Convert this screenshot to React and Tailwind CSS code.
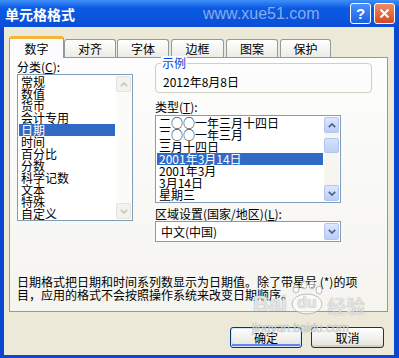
/*
 * excel "format cells" dialog, windows xp luna look
 */
const categories = ['常规', '数值', '货币', '会计专用', '日期', '时间', '百分比', '分数', '科学记数', '文本', '特殊', '自定义'];
const types = ['二○○一年三月十四日', '二○○一年三月', '三月十四日', '2001年3月14日', '2001年3月', '3月14日', '星期三'];
const tabs = [
  { label: '数字', cls: 'w-[55px]' },
  { label: '对齐', cls: 'w-[52px]' },
  { label: '字体', cls: 'w-[52px] ml-[1px]' },
  { label: '边框', cls: 'w-[53px] ml-[2px]' },
  { label: '图案', cls: 'w-[52px] ml-[2px]' },
  { label: '保护', cls: 'w-[51px] ml-[2px]' },
];

function Chevron({ up, color }) {
  return (
    <svg width="8" height="5" viewBox="0 0 8 5">
      <polyline
        points={up ? '0.8,4.2 4,1 7.2,4.2' : '0.8,0.8 4,4 7.2,0.8'}
        fill="none"
        stroke={color}
        strokeWidth="1.7"
      />
    </svg>
  );
}

function ScrollBtn({ up, disabled }) {
  return (
    <div
      className={`h-[16px] w-[15px] flex items-center justify-center rounded-[2px] border ${
        disabled
          ? 'border-[#e6e4dc] bg-[#f3f2ed]'
          : 'border-[#b3c5ef] bg-linear-to-b from-[#dde8fe] to-[#b9cdf8]'
      }`}
    >
      <Chevron up={up} color={disabled ? '#c9c7bb' : '#4d6185'} />
    </div>
  );
}

export default function App() {
  return (
    <div className="w-[399px] h-[358px] bg-[#0a48d2] relative overflow-hidden text-black font-['Noto_Sans_CJK_SC','Noto_Sans',sans-serif]">
      {/* title bar */}
      <div className="h-[27px] flex items-center bg-linear-to-b from-[#3f8ff8] via-[#0b5ae4] via-30% to-[#0a4fd6]">
        <span className="ml-[5px] text-[14px] font-bold text-white leading-none">单元格格式</span>
        <span className="ml-[128px] text-[16px] text-[#86acec] font-['Liberation_Sans',sans-serif] leading-none">www.xue51.com</span>
        <div className="ml-auto mr-[4px] flex gap-[3px]">
          <div className="w-[21px] h-[21px] rounded-[3px] border border-white bg-linear-to-b from-[#4b92fa] to-[#1d5fe2] flex items-center justify-center text-white text-[15px] font-bold font-['Liberation_Sans',sans-serif] leading-none">
            ?
          </div>
          <div className="w-[21px] h-[21px] rounded-[3px] border border-white bg-linear-to-b from-[#f08a64] to-[#d9471f] flex items-center justify-center">
            <svg width="11" height="11" viewBox="0 0 11 11">
              <path d="M1.5 1.5 L9.5 9.5 M9.5 1.5 L1.5 9.5" stroke="white" strokeWidth="2" />
            </svg>
          </div>
        </div>
      </div>

      {/* dialog body */}
      <div className="ml-[4px] mr-[5px] h-[328px] bg-[#ece9d8] pl-[5px] pt-[9px] flex flex-col text-[12px]">
        {/* tabs */}
        <div className="flex items-end h-[21px]">
          {tabs.map((t, i) =>
            i === 0 ? (
              <div
                key={t.label}
                className={`${t.cls} h-[22px] -mb-[1px] relative z-10 flex items-center justify-center pt-[1px] bg-[#fcfcfe] border-x border-[#919b9c] border-t-[3px] border-t-[#f5b53a] rounded-t-[3px]`}
              >
                {t.label}
              </div>
            ) : (
              <div
                key={t.label}
                className={`${t.cls} h-[18px] flex items-center justify-center border-x border-t border-[#919b9c] rounded-t-[3px] bg-linear-to-b from-white to-[#ecebe5]`}
              >
                {t.label}
              </div>
            )
          )}
        </div>

        {/* tab panel */}
        <div className="h-[255px] w-[379px] border border-[#919b9c] bg-linear-to-b from-[#fdfdfd] to-[#f5f4ef] pl-[7px] pt-[2px] flex flex-col">
          <div className="flex">
            {/* category column */}
            <div className="w-[116px]">
              <div className="h-[14px] leading-[13px]">
                分类(<span className="underline">C</span>):
              </div>
              <div className="h-[147px] border border-[#7f9db9] bg-white flex p-[1px]">
                <div className="flex-1">
                  {categories.map((c, i) => (
                    <div
                      key={c}
                      className={`h-[12px] leading-[12px] pl-[2px] ${i === 4 ? 'bg-[#316ac5] text-white' : ''}`}
                    >
                      {c}
                    </div>
                  ))}
                </div>
                <div className="w-[15px] ml-[1px] flex flex-col justify-between bg-[#fbfbf9]">
                  <ScrollBtn up disabled />
                  <ScrollBtn disabled />
                </div>
              </div>
            </div>

            {/* right column */}
            <div className="ml-[22px] flex flex-col">
              <div className="mt-[3px] w-[217px] h-[30px] border border-[#d0d0bf] rounded-[4px] relative pl-[7px] pt-[11px] leading-[13px]">
                <span className="absolute left-[5px] -top-[8px] px-[1px] bg-[#fcfcfd] text-[#0046d5] leading-[13px]">示例</span>
                2012年8月8日
              </div>

              <div className="mt-[7px] h-[13px] leading-[13px]">
                类型(<span className="underline">T</span>):
              </div>
              <div className="mt-[2px] w-[186px] h-[88px] border border-[#7f9db9] bg-white flex p-[1px]">
                <div className="flex-1">
                  {types.map((t, i) => (
                    <div
                      key={t}
                      className={`h-[12px] leading-[12px] pl-[2px] ${i === 3 ? 'bg-[#316ac5] text-white' : ''}`}
                    >
                      {t}
                    </div>
                  ))}
                </div>
                <div className="w-[15px] ml-[1px] flex flex-col bg-[#f6f5f0]">
                  <ScrollBtn up />
                  <div className="mt-[5px] h-[15px] rounded-[2px] border border-[#b3c5ef] bg-linear-to-b from-[#d6e3fd] to-[#bccff8]" />
                  <div className="flex-1" />
                  <ScrollBtn />
                </div>
              </div>

              <div className="mt-[4px] h-[13px] leading-[13px]">
                区域设置(国家/地区)(<span className="underline">L</span>):
              </div>
              <div className="mt-[1px] w-[186px] h-[21px] border border-[#7f9db9] bg-white flex items-center p-[1px]">
                <span className="flex-1 pl-[4px] leading-[13px]">中文(中国)</span>
                <div className="h-[17px] w-[15px] flex items-center justify-center rounded-[2px] border border-[#b3c5ef] bg-linear-to-b from-[#dde8fe] to-[#b9cdf8]">
                  <Chevron color="#4d6185" />
                </div>
              </div>
            </div>
          </div>

          {/* description */}
          <div className="mt-[33px] leading-[13px]">
            日期格式把日期和时间系列数显示为日期值。除了带星号 (*)的项
            <br />
            目，应用的格式不会按照操作系统来改变日期顺序。
          </div>
        </div>

        {/* buttons */}
        <div className="mt-[15px] flex justify-end gap-[9px] pr-[10px]">
          <button className="w-[72px] h-[21px] rounded-[3px] border border-[#003c74] bg-linear-to-b from-white to-[#e4e2da] shadow-[inset_0_0_0_1px_#cee7ff,inset_0_-2px_0_1px_#6982ee] leading-none">
            确定
          </button>
          <button className="w-[73px] h-[21px] rounded-[3px] border border-[#003c74] bg-linear-to-b from-white to-[#e4e2da] shadow-[inset_0_-2px_0_0_#d6d0c5] leading-none">
            取消
          </button>
        </div>
      </div>

      {/* baidu watermark over the dialog */}
      <div className="absolute left-[253px] top-[281px] flex items-end text-white/75 [text-shadow:0_0_1px_#8a8a8a] pointer-events-none">
        <span className="text-[22px] font-bold leading-none font-['Liberation_Sans',sans-serif]">Bai</span>
        <div className="relative w-[36px] h-[34px] ml-[2px]">
          <svg width="36" height="34" viewBox="0 0 36 34" className="absolute inset-0">
            <g fill="white" fillOpacity="0.55" stroke="#a0a0a0" strokeWidth="0.7">
              <ellipse cx="7" cy="8" rx="3" ry="4" />
              <ellipse cx="15" cy="4" rx="3" ry="4" />
              <ellipse cx="23" cy="4" rx="3" ry="4" />
              <ellipse cx="30" cy="9" rx="3" ry="4" />
              <ellipse cx="18" cy="23" rx="15" ry="10" />
            </g>
          </svg>
          <span className="absolute left-[8px] top-[14px] text-[16px] font-bold leading-none font-['Liberation_Sans',sans-serif]">du</span>
        </div>
        <span className="ml-[2px] text-[19px] leading-none">经验</span>
      </div>
      <div className="absolute left-[252px] top-[322px] text-[12px] leading-none text-white/65 [text-shadow:0_0_1px_#777] font-['Liberation_Sans',sans-serif] pointer-events-none">
        jingyan.baidu.com
      </div>
    </div>
  );
}
